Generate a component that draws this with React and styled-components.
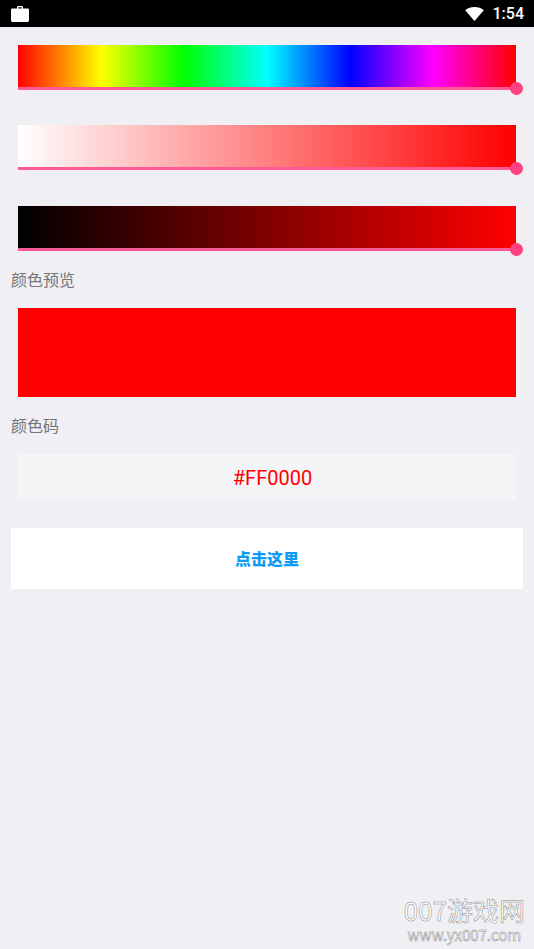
import styled, { createGlobalStyle } from "styled-components";

const GlobalStyle = createGlobalStyle`
  html, body {
    margin: 0;
    padding: 0;
    background: #efeff4;
  }
  body {
    font-family: Roboto, "Noto Sans CJK SC", sans-serif;
  }
`;

const sliders = [
  {
    name: "hue",
    gap: 35,
    fill: "linear-gradient(to right, #f00 0%, #ff0 16.67%, #0f0 33.33%, #0ff 50%, #00f 66.67%, #f0f 83.33%, #f00 100%)",
  },
  { name: "sat", gap: 36, fill: "linear-gradient(to right, #fff, #f00)" },
  { name: "val", gap: 0, fill: "linear-gradient(to right, #000, #f00)" },
];

function App() {
  return (
    <Page>
      <GlobalStyle />
      <StatusBar>
        <svg width="20" height="18" viewBox="0 0 20 18">
          <path
            d="M7 3.500V2.200C7 1.500 7.600 1 8.200 1h3.600c.6 0 1.200.5 1.200 1.200v1.300h4.600c.8 0 1.400.6 1.400 1.400v10.700c0 .8-.6 1.400-1.400 1.400H2.400c-.8 0-1.400-.6-1.400-1.400V4.900c0-.8.6-1.400 1.400-1.400H7zm1.300 0h3.400V2.300H8.300v1.200z"
            fill="#fff"
            fillRule="evenodd"
          />
        </svg>
        <StatusRight>
          <svg width="19" height="14" viewBox="0 0 20 15">
            <path d="M0 3.400C2.800 1.200 6.200 0 10 0s7.200 1.200 10 3.400L10 15 0 3.400z" fill="#fff" />
          </svg>
          <Clock>1:54</Clock>
        </StatusRight>
      </StatusBar>
      <Content>
        {sliders.map((s) => (
          <Slider key={s.name} $gap={s.gap}>
            <Strip $fill={s.fill} />
            <Track />
            <Thumb />
          </Slider>
        ))}
        <Label>颜色预览</Label>
        <Preview />
        <Label>颜色码</Label>
        <CodeBox>#FF0000</CodeBox>
        <ActionButton>点击这里</ActionButton>
      </Content>
      <Watermark>
        <span>007游戏网</span>
        <small>www.yx007.com</small>
      </Watermark>
    </Page>
  );
}
export default App;

const Page = styled.div`
  position: relative;
  width: 534px;
  height: 949px;
  overflow: hidden;
  background: #efeff4;
`;
const StatusBar = styled.header`
  height: 27px;
  background: #000;
  display: flex;
  justify-content: space-between;
  align-items: center;
  padding: 0 10px;
  box-sizing: border-box;
`;
const StatusRight = styled.div`
  display: flex;
  align-items: center;
  gap: 9px;
`;
const Clock = styled.span`
  color: #fff;
  font-size: 16px;
  font-weight: 500;
`;
const Content = styled.main`
  display: flex;
  flex-direction: column;
  padding: 18px 11px 0;
`;
const Slider = styled.div`
  position: relative;
  margin: 0 7px ${(p) => p.$gap}px;
`;
const Strip = styled.div`
  height: 42px;
  background: ${(p) => p.$fill};
`;
const Track = styled.div`
  height: 3px;
  background: #ff4081;
  opacity: 0.85;
`;
const Thumb = styled.div`
  position: absolute;
  right: -7px;
  bottom: -5px;
  width: 13px;
  height: 13px;
  border-radius: 50%;
  background: #ff4081;
`;
const Label = styled.div`
  height: 22px;
  margin-top: 19px;
  font-size: 16px;
  line-height: 22px;
  color: #757575;
`;
const Preview = styled.div`
  height: 89px;
  margin: 16px 7px 0;
  background: #f00;
`;
const CodeBox = styled.div`
  height: 45px;
  margin: 16px 7px 0;
  padding-left: 11px;
  background: #f5f5f8;
  color: #f00;
  font-size: 20px;
  line-height: 49px;
  text-align: center;
`;
const ActionButton = styled.button`
  height: 61px;
  margin-top: 29px;
  border: 0;
  padding: 0 0 2px;
  background: #fff;
  color: #0f9bf5;
  font-family: inherit;
  font-size: 16px;
  font-weight: 900;
`;
const Watermark = styled.div`
  position: absolute;
  right: 9px;
  bottom: 5px;
  display: flex;
  flex-direction: column;
  align-items: center;
  color: #fff;
  font-family: "Noto Sans CJK SC", sans-serif;
  -webkit-text-stroke: 0.5px #8a8a8a;
  span {
    font-size: 26px;
    line-height: 32px;
  }
  small {
    font-size: 15px;
    line-height: 18px;
  }
`;
